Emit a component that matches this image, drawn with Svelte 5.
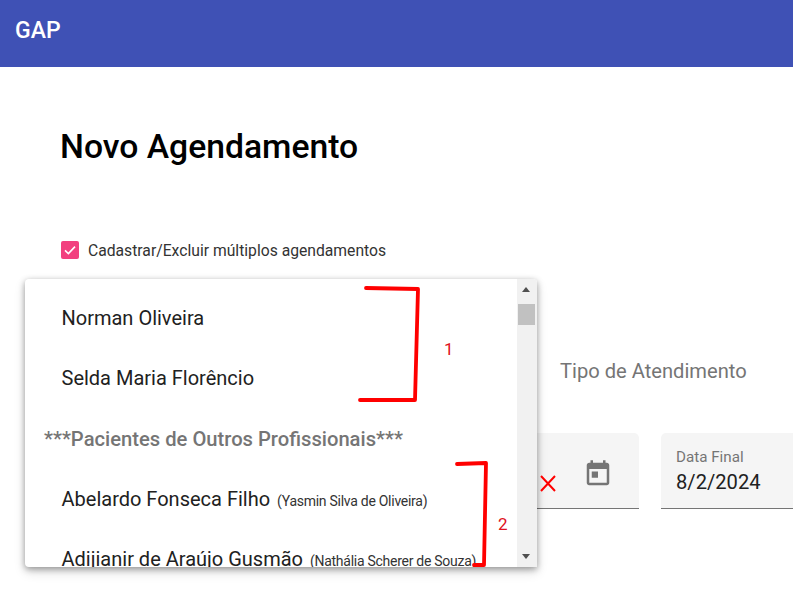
<script>
    const options = [
        { name: "Norman Oliveira" },
        { name: "Selda Maria Florêncio" },
        { group: "***Pacientes de Outros Profissionais***" },
        { name: "Abelardo Fonseca Filho", owner: "(Yasmin Silva de Oliveira)" },
        { name: "Adijianir de Araújo Gusmão", owner: "(Nathália Scherer de Souza)" }
    ];
</script>

<div class="page">
    <header class="toolbar">GAP</header>

    <main class="content">
        <h1>Novo Agendamento</h1>

        <label class="check_row">
            <span class="check_box">
                <svg width="18" height="18" viewBox="0 0 18 18">
                    <path d="M4 9.4 7.4 12.6 14 5.6" fill="none" stroke="#fff" stroke-width="1.6" />
                </svg>
            </span>
            <span>Cadastrar/Excluir múltiplos agendamentos</span>
        </label>

        <div class="type_row">Tipo de Atendimento</div>

        <div class="date_row">
            <div class="date_field start">
                <svg class="cal" width="30" height="30" viewBox="0 0 24 24">
                    <path fill="#757575" d="M19 3h-1V1h-2v2H8V1H6v2H5c-1.1 0-2 .9-2 2v14c0 1.1.9 2 2 2h14c1.1 0 2-.9 2-2V5c0-1.100-.9-2-2-2zm0 16H5V8h14v11zM7 10h5v5H7z" />
                </svg>
            </div>
            <div class="date_field end">
                <span class="field_label">Data Final</span>
                <span class="field_value">8/2/2024</span>
            </div>
        </div>
    </main>

    <div class="panel">
        <div class="list">
            {#each options as o}
                {#if o.group}
                    <div class="group">{o.group}</div>
                {:else}
                    <div class="option">{o.name}{#if o.owner}&nbsp;<small>{o.owner}</small>{/if}</div>
                {/if}
            {/each}
        </div>
        <div class="scrollbar">
            <span class="arrow up"></span>
            <span class="thumb"></span>
            <span class="arrow down"></span>
        </div>
    </div>

    <svg class="marks" width="793" height="595" viewBox="0 0 793 595">
        <g fill="none" stroke="#f00" stroke-width="3.800" stroke-linecap="round" stroke-linejoin="round">
            <path d="M366 288 418 289 415 400 360 400" />
            <path d="M457 464 486 463 484 565 474 565" />
        </g>
        <path d="M541 476 555 491M555 476 541 491" fill="none" stroke="#f00" stroke-width="2" />
        <text x="444" y="355" class="mark_text">1</text>
        <text x="498" y="530" class="mark_text">2</text>
    </svg>
</div>

<style>
    :global(body) {
        margin: 0;
        background: #fff;
    }
    .page {
        position: relative;
        width: 793px;
        height: 595px;
        overflow: hidden;
        font-family: Roboto, "Liberation Sans", sans-serif;
        color: #212121;
    }
    .toolbar {
        height: 67px;
        box-sizing: border-box;
        padding: 18px 15px 0;
        background: #3f51b5;
        color: #fff;
        font-size: 23px;
        font-weight: 500;
        line-height: 26px;
    }
    .content {
        padding: 57px 0 0 60px;
    }
    h1 {
        margin: 0;
        font-size: 33.700px;
        font-weight: 500;
        line-height: 46px;
        color: #000;
    }
    .check_row {
        display: flex;
        align-items: center;
        gap: 9px;
        margin: 71px 0 0 1px;
        height: 18px;
        font-size: 15.700px;
        color: #333;
    }
    .check_box {
        width: 18px;
        height: 18px;
        border-radius: 2px;
        background: #f2407f;
    }
    .check_box svg {
        display: block;
    }
    .type_row {
        margin: 90px 0 0 500px;
        font-size: 20.150px;
        line-height: 44px;
        color: #757575;
        white-space: nowrap;
    }
    .date_row {
        display: flex;
        gap: 22px;
        margin: 40px 0 0 400px;
        width: 460px;
    }
    .date_field {
        display: flex;
        flex-direction: column;
        box-sizing: border-box;
        height: 76px;
        background: #f5f5f5;
        border-bottom: 1px solid #757575;
        border-radius: 5px 5px 0 0;
    }
    .start {
        position: relative;
        width: 179px;
    }
    .cal {
        position: absolute;
        left: 123px;
        top: 26px;
    }
    .end {
        width: 200px;
        padding: 15px 15px 0;
    }
    .field_label {
        font-size: 15.200px;
        line-height: 18px;
        color: #757575;
    }
    .field_value {
        margin-top: 2px;
        font-size: 20.150px;
        line-height: 28px;
        color: #212121;
    }
    .panel {
        position: absolute;
        left: 25px;
        top: 279px;
        display: flex;
        width: 512px;
        height: 288px;
        overflow: hidden;
        border-radius: 4px 4px 0 4px;
        background: #fff;
        box-shadow: 0 2px 6px rgba(0, 0, 0, 0.35), 0 5px 12px rgba(0, 0, 0, 0.14);
    }
    .list {
        flex: 1;
        padding-top: 9px;
        min-width: 0;
        white-space: nowrap;
    }
    .option, .group {
        height: 60.300px;
        line-height: 60px;
        font-size: 20px;
        color: #212121;
    }
    .option {
        padding-left: 36.500px;
    }
    .group {
        padding-left: 19px;
        font-weight: 500;
        font-size: 20.200px;
        color: #757575;
    }
    small {
        margin-left: 2px;
        font-size: 14px;
        letter-spacing: -0.27px;
        color: #333;
    }
    .scrollbar {
        position: relative;
        flex: none;
        width: 20px;
        background: #f1f1f1;
    }
    .thumb {
        position: absolute;
        left: 1px;
        top: 25px;
        width: 17px;
        height: 21px;
        background: #c1c1c1;
    }
    .arrow {
        position: absolute;
        left: 5px;
        border-left: 4.500px solid transparent;
        border-right: 4.500px solid transparent;
    }
    .up {
        top: 8px;
        border-bottom: 5px solid #505050;
    }
    .down {
        bottom: 8px;
        border-top: 5px solid #505050;
    }
    .marks {
        position: absolute;
        left: 0;
        top: 0;
        pointer-events: none;
    }
    .mark_text {
        font-family: Roboto, sans-serif;
        font-size: 17px;
        fill: #e01020;
    }
</style>
